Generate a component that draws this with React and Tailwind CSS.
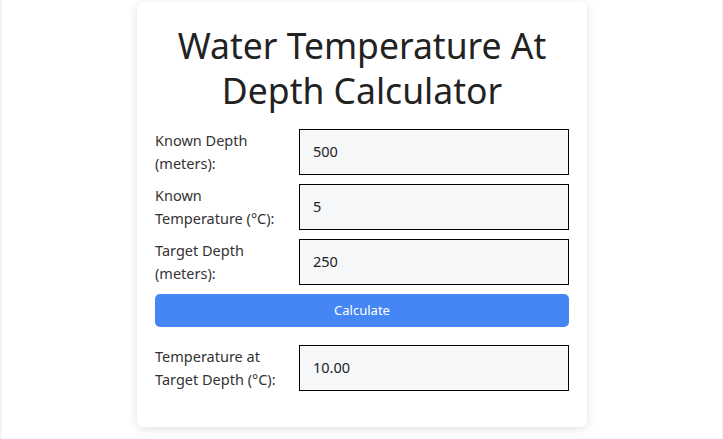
import React from "react";

const font = { fontFamily: '"Noto Sans", "Open Sans", sans-serif' };

function Row({ label, value }) {
  return (
    <div className="grid grid-cols-[144px_270px] items-center">
      <label className="text-[14.5px] leading-[23px] text-[#333] pr-2">{label}</label>
      <div className="h-[46px] border border-black bg-[#f6f7f9] flex items-center px-[13px] text-[14.5px] text-[#222]">
        {value}
      </div>
    </div>
  );
}

export default function App() {
  return (
    <div className="h-[439px] bg-[#f3f3f3] pl-[2px] pr-[1px]" style={font}>
      <div className="h-full bg-white flex justify-center">
        <div className="w-[450px] h-[425px] mt-[2px] bg-white rounded-md shadow-[0_2px_10px_rgba(0,0,0,0.12)] px-[18px] pt-[21px]">
          <h1 className="text-center text-[35.5px] leading-[45px] text-[#222] font-normal">
            Water Temperature At Depth Calculator
          </h1>
          <div className="mt-[16px] flex flex-col gap-[9px]">
            <Row label="Known Depth (meters):" value="500" />
            <Row label="Known Temperature (°C):" value="5" />
            <Row label="Target Depth (meters):" value="250" />
          </div>
          <button className="mt-[9px] w-full h-[33px] rounded-[5px] bg-[#4486f4] text-white text-[13px]">
            Calculate
          </button>
          <div className="mt-[18px]">
            <Row label="Temperature at Target Depth (°C):" value="10.00" />
          </div>
        </div>
      </div>
    </div>
  );
}
